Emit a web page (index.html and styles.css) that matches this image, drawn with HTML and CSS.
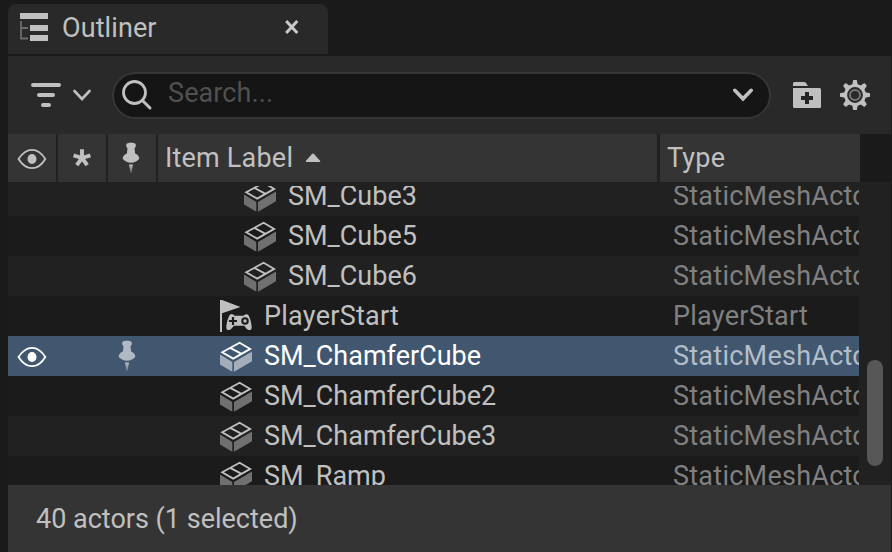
FILE: index.html
```
<!DOCTYPE html>
<html lang="en">
<head>
<meta charset="utf-8">
<title>Outliner</title>
<link rel="stylesheet" href="styles.css">
</head>
<body>
<svg class="defs" width="0" height="0">
  <symbol id="cube" viewBox="0 0 32 32">
    <path class="cube-side" d="M0 14.4 12.3 22V31.7L0 24.6ZM14 22 32 11.5V21.3L14 31.7Z"/>
    <path class="cube-top" d="M2.2 12.3 19.6 2.8 30.2 8.9 13.2 18.6ZM10.2 7.9 21.6 13.9"/>
  </symbol>
  <symbol id="eye" viewBox="0 0 30 22">
    <path d="M1.5 11C5.5 4.7 10 1.8 15 1.8S24.5 4.7 28.3 11C24.5 17.3 20 20.2 15 20.2S5.5 17.3 1.5 11Z" fill="none" stroke="currentColor" stroke-width="1.8"/>
    <ellipse cx="15" cy="11" rx="4.5" ry="5.1" fill="currentColor"/>
  </symbol>
  <symbol id="pin" viewBox="0 0 18 32">
    <path d="M4.2 2.4C4.2.3 13.8.3 13.8 2.4V4.4L12.5 6.2 13.1 11.6C16 13 17.3 14.6 17.3 16.8 15.8 19.2 12.5 20.7 9 20.7S2.2 19.2.7 16.8C.7 14.6 2 13 4.9 11.6L5.5 6.2 4.2 4.4Z" fill="currentColor"/>
    <path d="M7 22.6H11L9.5 31H8.6Z" fill="url(#needle)"/>
  </symbol>
  <linearGradient id="needle" x1="0" y1="0" x2="0" y2="1"><stop offset="0" stop-color="#c0c0c0"/><stop offset="1" stop-color="#c0c0c0" stop-opacity=".3"/></linearGradient>
</svg>
<main class="panel">
  <div class="tab">
    <svg class="tab-icon" width="28" height="28" viewBox="0 0 28 28"><path d="M0 0H28V6H0ZM10 12H28V18H10ZM10 22H28V28H10Z" fill="#c0c0c0"/><path d="M1 8V25.5H8M1 15H8" fill="none" stroke="#6b6b6b" stroke-width="1.8"/></svg>
    <span class="tab-title">Outliner</span>
    <svg class="close" width="16" height="16" viewBox="0 0 16 16"><path d="M2.2 2 13.3 14M13.3 2 2.2 14" stroke="#c8c8c8" stroke-width="3" fill="none"/></svg>
  </div>
  <div class="toolbar">
    <svg class="filter" width="60" height="26" viewBox="0 0 60 26"><path d="M2 3H28M8 13H22M12 23H18" stroke="#c0c0c0" stroke-width="4" stroke-linecap="round"/><path d="M43.5 9 51 17 58.5 9" fill="none" stroke="#c0c0c0" stroke-width="2.6" stroke-linecap="round"/></svg>
    <div class="search">
      <svg width="32" height="32" viewBox="0 0 32 32"><circle cx="13.5" cy="13.5" r="11" fill="none" stroke="#c0c0c0" stroke-width="2.8"/><path d="M21.5 21.5 29 29" stroke="#c0c0c0" stroke-width="3" stroke-linecap="round"/></svg>
      <span class="placeholder">Search...</span>
      <svg width="20" height="14" viewBox="0 0 20 14"><path d="M1.8 2.3 10 10.8 18.2 2.3" fill="none" stroke="#c0c0c0" stroke-width="3.6" stroke-linecap="round"/></svg>
    </div>
    <svg class="folder" width="28" height="26" viewBox="0 0 28 26"><path d="M0 4V1.5Q0 0 1.5 0H11Q12.4 0 13.2 1.2L15 4Z" fill="#c0c0c0"/><path d="M0 6H26.5Q28 6 28 7.5V24.5Q28 26 26.5 26H1.5Q0 26 0 24.5Z" fill="#c0c0c0"/><path d="M14 10V22M8 16H20" stroke="#242424" stroke-width="4"/></svg>
    <svg class="gear" width="30" height="30" viewBox="-15 -15 30 30">
      <circle r="9.4" fill="none" stroke="#c0c0c0" stroke-width="3"/>
      <path d="M-2.8-10-1.8-15H1.8L2.8-10ZM-2.8 10-1.8 15H1.8L2.8 10ZM-10-2.8-15-1.8V1.8L-10 2.8ZM10-2.8 15-1.8V1.8L10 2.8Z" fill="#c0c0c0"/>
      <path transform="rotate(45)" d="M-2.8-10-1.8-15H1.8L2.8-10ZM-2.8 10-1.8 15H1.8L2.8 10ZM-10-2.8-15-1.8V1.8L-10 2.8ZM10-2.8 15-1.8V1.8L10 2.8Z" fill="#c0c0c0"/>
      <circle r="5" fill="none" stroke="#767676" stroke-width="2"/>
    </svg>
  </div>
  <div class="head">
    <div class="cell"><svg class="head-eye" width="30" height="22"><use href="#eye"/></svg></div>
    <div class="cell"><svg class="star" width="18" height="18" viewBox="-9 -9 18 18"><path d="M0 0V-8.7M0 0 8.4-2.7M0 0 5.2 7.2M0 0-5.2 7.2M0 0-8.4-2.7" stroke="#c0c0c0" stroke-width="3.9"/></svg></div>
    <div class="cell"><svg class="head-pin" width="18" height="32"><use href="#pin"/></svg></div>
    <div class="cell label"><span>Item Label</span><svg width="16" height="10" viewBox="0 0 16 10"><path d="M1.5 9Q0 9 1.2 7.5L6.8 1.2Q8 0 9.2 1.2L14.8 7.5Q16 9 14.5 9Z" fill="#c0c0c0"/></svg></div>
    <div class="cell type-head"><span>Type</span></div>
  </div>
  <div class="body">
    <div class="rows">
      <div class="row child first"><div class="name"><svg class="cube"><use href="#cube"/></svg><span>SM_Cube3</span></div><div class="type">StaticMeshActor</div></div>
      <div class="row child"><div class="name"><svg class="cube"><use href="#cube"/></svg><span>SM_Cube5</span></div><div class="type">StaticMeshActor</div></div>
      <div class="row child"><div class="name"><svg class="cube"><use href="#cube"/></svg><span>SM_Cube6</span></div><div class="type">StaticMeshActor</div></div>
      <div class="row player"><div class="name"><svg class="cube" viewBox="0 0 32 32"><path d="M0 0H2L20.5 7 2 13.3V32H0Z" fill="#c0c0c0"/><path d="M10.2 14.5Q12.8 13.3 14.5 15.8H23.5Q25.3 13.3 27.8 14.6C30 17 31.5 23 31.7 27.5 31.7 30.8 28 30.8 26 28L24.2 25.7H14L12 28C10 30.8 6.3 30.8 6.3 27.5 6.5 23 8 17 10.2 14.5Z" fill="#c0c0c0"/><path d="M13 17V25M9 21H17" stroke="#1b1b1b" stroke-width="2.2"/><circle cx="25" cy="21" r="2.7" fill="none" stroke="#1b1b1b" stroke-width="2.1"/></svg><span>PlayerStart</span></div><div class="type">PlayerStart</div></div>
      <div class="row selected"><svg class="row-eye" width="30" height="22"><use href="#eye"/></svg><svg class="row-pin" width="18" height="32"><use href="#pin"/></svg><div class="name"><svg class="cube"><use href="#cube"/></svg><span>SM_ChamferCube</span></div><div class="type">StaticMeshActor</div></div>
      <div class="row"><div class="name"><svg class="cube"><use href="#cube"/></svg><span>SM_ChamferCube2</span></div><div class="type">StaticMeshActor</div></div>
      <div class="row"><div class="name"><svg class="cube"><use href="#cube"/></svg><span>SM_ChamferCube3</span></div><div class="type">StaticMeshActor</div></div>
      <div class="row"><div class="name"><svg class="cube"><use href="#cube"/></svg><span>SM_Ramp</span></div><div class="type">StaticMeshActor</div></div>
    </div>
    <div class="scroll"><div class="thumb"></div></div>
  </div>
  <footer class="status">40 actors (1 selected)</footer>
</main>
</body>
</html>
```
FILE: styles.css
```
* { box-sizing: border-box; }
body {
  margin: 0;
  height: 552px;
  overflow: hidden;
  background: #1a1a1a;
  color: #c0c0c0;
  font: 27px/40px Roboto, sans-serif;
  white-space: nowrap;
}
svg { flex: none; display: block; }
.defs { height: 0; }
.panel { display: flex; flex-direction: column; width: 883px; height: 552px; margin-left: 8px; padding-top: 4px; }
.tab { display: flex; align-items: center; flex: none; width: 320px; height: 50px; padding: 0 28px 0 12px; background: #292929; border-radius: 8px 8px 0 0; margin-bottom: 2px; }
.tab-icon { margin-top: -4px; }
.tab-title { margin: -2px 0 0 14px; letter-spacing: 0.1px; }
.close { margin: -5px 0 0 auto; }
.toolbar { display: flex; flex: none; align-items: center; height: 78px; padding-left: 23px; background: #292929; }
.search { display: flex; align-items: center; width: 659px; height: 47px; margin-left: 21px; padding: 0 16px 0 7px; border: 2px solid #363636; border-radius: 24px; background: #151515; }
.placeholder { flex: 1; margin: -5px 0 0 15px; color: #505050; letter-spacing: 0.1px; }
.folder { margin: -1px 0 0 22px; }
.gear { margin-left: 19px; }
.head { display: flex; flex: none; gap: 2px; width: 852px; height: 48px; background: #212121; }
.cell { display: flex; align-items: center; justify-content: center; width: 48px; background: #343434; }
.head .label { justify-content: flex-start; width: 499px; padding-left: 7px; letter-spacing: 0.2px; }
.label svg { margin-left: 12px; }
.head .type-head { justify-content: flex-start; width: 200px; margin-left: 1px; padding-left: 7px; letter-spacing: 0.2px; }
.head-eye { margin-top: 2px; }
.star { margin-top: -1px; }
.head-pin { margin-left: -2px; }
.body { display: flex; flex: none; height: 303px; padding-top: 4px; background: #212121; }
.rows { width: 851px; overflow: hidden; }
.row { display: flex; width: 851px; height: 40px; overflow: hidden; background: #212121; }
.row:nth-child(even) { background: #1b1b1b; }
.row:nth-child(6) { background: #1b1b1b; }
.first { margin-top: -10px; }
.name { display: flex; flex: none; align-items: center; width: 653px; padding-left: 212px; gap: 12px; }
.player { letter-spacing: 0.25px; }
.child .name { padding-left: 236px; }
.type { flex: none; margin-left: 12px; color: #808080; letter-spacing: 0.25px; }
.cube { width: 32px; height: 32px; }
.cube-side { fill: var(--side, #707070); }
.cube-top { fill: none; stroke: currentColor; stroke-width: 1.8; }
.row.selected { background: #40576f; color: #fff; --side: #a4aeba; }
.selected .name { width: 514px; padding-left: 73px; margin-left: 11px; }
.selected .type { color: #b3bdc8; }
.row-eye { margin: 10px 0 0 9px; }
.row-pin { margin: 4px 0 0 71px; color: #b0bac5; }
.scroll { display: flex; width: 32px; padding: 174px 0 0 8px; }
.thumb { width: 16px; height: 106px; border-radius: 8px; background: #575757; }
.status { flex: 1; padding: 14px 0 0 28px; background: #343434; }
```
